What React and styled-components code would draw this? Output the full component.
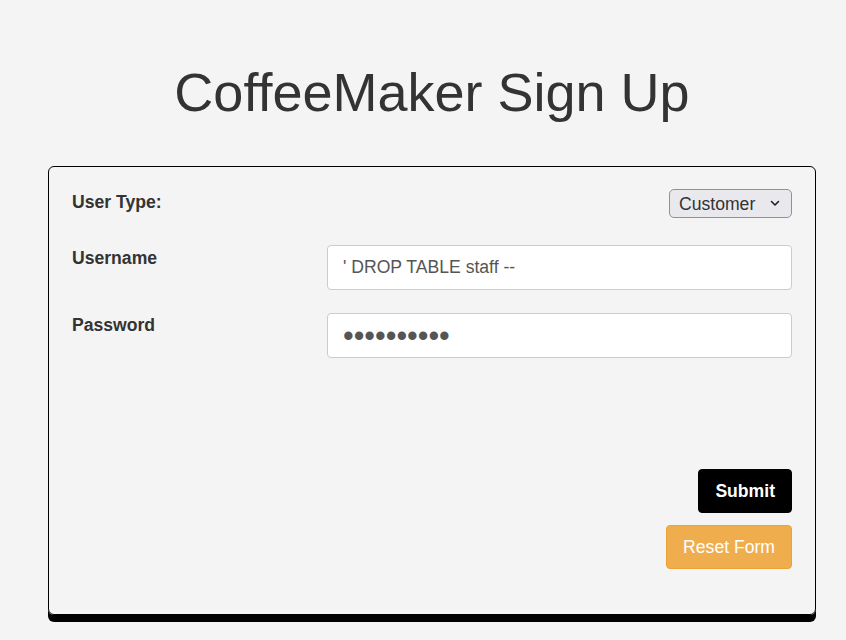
import React, { useState } from "react";
import styled, { createGlobalStyle } from "styled-components";

const Global = createGlobalStyle`
  html, body { margin: 0; padding: 0; background: #f4f4f4; }
  body { font-family: "Liberation Sans", Arial, sans-serif; color: #333; }
  * { box-sizing: border-box; }
`;

const Page = styled.div`
  padding: 61px 30px 30px 48px;
`;

const Container = styled.div`
  width: 768px;
`;

const Title = styled.h1`
  margin: 0 0 43px;
  font-size: 54px;
  font-weight: 400;
  line-height: 62px;
  text-align: center;
  color: #333;
`;

const Card = styled.form`
  border: 1px solid #000;
  border-radius: 6px;
  box-shadow: 0 7px 0 #000;
  padding: 22px 23px 45px;
  display: flex;
  flex-direction: column;
`;

const TypeRow = styled.div`
  display: flex;
  justify-content: space-between;
  align-items: center;
  margin-bottom: 27px;
`;

const FieldRow = styled.div`
  display: grid;
  grid-template-columns: 255px 1fr;
  align-items: start;
  margin-bottom: ${(p) => p.$gap}px;
`;

const Label = styled.label`
  font-size: 17.6px;
  font-weight: 700;
  color: #333;
  line-height: 20px;
  padding-top: ${(p) => p.$pt || 0}px;
  margin-top: ${(p) => p.$mt || 0}px;
`;

const SelectWrap = styled.div`
  position: relative;
  display: inline-flex;
`;

const Select = styled.select`
  appearance: none;
  -webkit-appearance: none;
  font-family: "Liberation Sans", Arial, sans-serif;
  font-size: 17.6px;
  color: #333;
  width: 123px;
  height: 29px;
  padding: 0 28px 0 9px;
  background: #e9e9ed;
  border: 1px solid #8f8f9d;
  border-radius: 5px;
  outline: none;
`;

const Chevron = styled.svg`
  position: absolute;
  right: 12px;
  top: 11px;
  width: 10px;
  height: 7px;
  pointer-events: none;
`;

const Input = styled.input`
  width: 100%;
  height: 45px;
  padding: 0 15px;
  font-family: "Liberation Sans", Arial, sans-serif;
  font-size: ${(p) => (p.type === "password" ? "30.5px" : "17.6px")};
  color: #555;
  background: #fff;
  border: 1px solid #ccc;
  border-radius: 4px;
  outline: none;
`;

const Actions = styled.div`
  display: flex;
  flex-direction: column;
  align-items: flex-end;
  gap: 12px;
  margin-top: 111px;
`;

const Button = styled.button`
  font-family: "Liberation Sans", Arial, sans-serif;
  font-size: 17.6px;
  line-height: 20px;
  height: 44px;
  padding: 0 16px;
  color: #fff;
  font-weight: ${(p) => (p.$primary ? 700 : 400)};
  background: ${(p) => (p.$primary ? "#000" : "#f0ad4e")};
  border: 1px solid ${(p) => (p.$primary ? "#000" : "#eea236")};
  border-radius: 4px;
  cursor: pointer;
`;

export default function App() {
  const [user, setUser] = useState("' DROP TABLE staff --");
  const [pw, setPw] = useState("abcdefghij");
  return (
    <>
      <Global />
      <Page>
        <Container>
          <Title>CoffeeMaker Sign Up</Title>
          <Card onSubmit={(e) => e.preventDefault()}>
            <TypeRow>
              <Label $mt={-3}>User Type:</Label>
              <SelectWrap>
                <Select defaultValue="customer">
                  <option value="customer">Customer</option>
                  <option value="staff">Staff</option>
                </Select>
                <Chevron viewBox="0 0 10 7" fill="none">
                  <path d="M1.5 1.5L5 5L8.5 1.5" stroke="#222" strokeWidth="1.6" strokeLinecap="round" strokeLinejoin="round" />
                </Chevron>
              </SelectWrap>
            </TypeRow>
            <FieldRow $gap={23}>
              <Label $pt={3}>Username</Label>
              <Input value={user} onChange={(e) => setUser(e.target.value)} />
            </FieldRow>
            <FieldRow $gap={0}>
              <Label $pt={2}>Password</Label>
              <Input type="password" value={pw} onChange={(e) => setPw(e.target.value)} />
            </FieldRow>
            <Actions>
              <Button type="submit" $primary>Submit</Button>
              <Button type="reset">Reset Form</Button>
            </Actions>
          </Card>
        </Container>
      </Page>
    </>
  );
}
